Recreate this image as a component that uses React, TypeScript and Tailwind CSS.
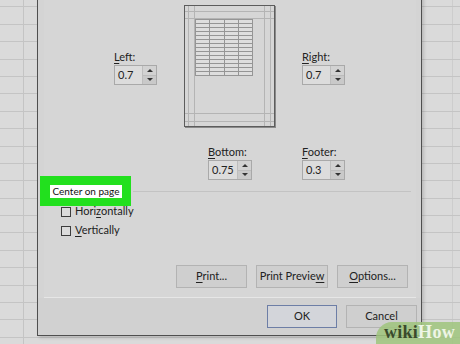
import React from 'react';

const font = { fontFamily: 'Lato, "Open Sans", sans-serif' };

const SpinBox: React.FC<{ label: React.ReactNode; value: string; width?: string }> = ({ label, value, width = 'w-[43px]' }) => (
  <div className={`flex flex-col ${width}`}>
    <div className="h-[14px] mb-[1px] text-[11px] leading-[14px] text-[#222]">{label}</div>
    <div className="flex h-[20px] border border-[#a9a9a9] bg-[#dcdcdc]">
      <div className="flex-1 flex items-center pl-[3px] text-[11px] text-[#222]">{value}</div>
      <div className="w-[14px] flex flex-col border-l border-[#bdbdbd]">
        <div className="flex-1 flex items-center justify-center bg-[#d2d2d2] border-b border-[#bcbcbc]">
          <span className="block w-0 h-0 border-l-[3px] border-r-[3px] border-b-[3px] border-l-transparent border-r-transparent border-b-[#333]" />
        </div>
        <div className="flex-1 flex items-center justify-center bg-[#c9c9c9]">
          <span className="block w-0 h-0 border-l-[3px] border-r-[3px] border-t-[3px] border-l-transparent border-r-transparent border-t-[#333]" />
        </div>
      </div>
    </div>
  </div>
);

const Btn: React.FC<{ children: React.ReactNode; w?: string; def?: boolean }> = ({ children, w = 'w-[71px]', def }) => (
  <div
    className={`${w} h-[23px] flex items-center justify-center text-[11px] text-[#222] bg-[#cfcfcf] border ${
      def ? 'border-[#6d7ea6] bg-[#d3d5da]' : 'border-[#b3b3b3]'
    }`}
  >
    {children}
  </div>
);

const PagePreview = () => {
  const rows = Array.from({ length: 14 }, (_, i) => 14 + i * 4);
  return (
    <svg width="92" height="123" viewBox="0 0 92 123">
      <rect x="0.5" y="0.5" width="90" height="121" fill="#d6d6d6" stroke="#5c5c5c" />
      <line x1="91.5" y1="1" x2="91.5" y2="123" stroke="#8a8a8a" />
      <line x1="1" y1="122.5" x2="92" y2="122.5" stroke="#8a8a8a" />
      {[4, 10, 80, 86].map((x) => (
        <line key={x} x1={x + 0.5} y1="1" x2={x + 0.5} y2="121" stroke="#b4b4b4" />
      ))}
      {[6, 13, 108, 116].map((y) => (
        <line key={y} x1="1" y1={y + 0.5} x2="90" y2={y + 0.5} stroke="#b4b4b4" />
      ))}
      <rect x="11.5" y="14.5" width="57" height="56" fill="#dedede" stroke="#959595" />
      {rows.map((y) => (
        <line key={y} x1="11.5" y1={y + 0.5} x2="68.5" y2={y + 0.5} stroke="#959595" />
      ))}
      {[25, 40, 54].map((x) => (
        <line key={x} x1={x + 0.5} y1="14.5" x2={x + 0.5} y2="70.5" stroke="#959595" />
      ))}
    </svg>
  );
};

const App: React.FC = () => {
  const rows = Array.from({ length: 22 });

  return (
    <div className="relative w-[460px] h-[344px] overflow-hidden bg-[#dadada]" style={font}>
      {/* spreadsheet behind the dialog */}
      <div className="flex flex-col -mt-[10px]">
        {rows.map((_, i) => (
          <div key={i} className="flex h-[17.4px] shrink-0 border-b border-[#c4c4c4]">
            <div className="w-[24px] border-r border-[#c4c4c4]" />
            <div className="flex-1" />
            <div className="w-[8px] border-l border-[#cdcdcd]" />
          </div>
        ))}
      </div>

      {/* Page Setup dialog */}
      <div className="absolute left-[37px] top-[-10px] w-[385px] h-[346px] flex flex-col bg-[#d4d4d4] border border-[#4f4f4f] shadow-[2px_2px_3px_rgba(0,0,0,0.15)]">
        <div className="flex-1 flex flex-col ml-[6px] mr-[5px] bg-[#d6d6d6] border-b border-[#e6e6e6]">
          <div className="flex items-start mt-[14px] pl-[70px]">
            <div className="mt-[45px]">
              <SpinBox label={<><u className="underline-offset-2">L</u>eft:</>} value="0.7" />
            </div>
            <div className="ml-[27px]">
              <PagePreview />
            </div>
            <div className="ml-[26px] mt-[45px]">
              <SpinBox label={<><u className="underline-offset-2">R</u>ight:</>} value="0.7" />
            </div>
          </div>

          <div className="flex items-start mt-[17px] pl-[164px]">
            <SpinBox label={<><u className="underline-offset-2">B</u>ottom:</>} value="0.75" width="w-[44px]" />
            <div className="ml-[50px]">
              <SpinBox label={<><u className="underline-offset-2">F</u>ooter:</>} value="0.3" />
            </div>
          </div>

          <div className="flex items-center -mt-[4px]">
            <div className="-ml-[4px] pl-[10px] pr-[9px] pt-[9px] pb-[8px] bg-[#22e01e]">
              <div className="w-[72px] h-[13px] bg-white flex items-center justify-center text-[10px] text-[#111] whitespace-nowrap">
                Center on page
              </div>
            </div>
            <div className="flex-1 h-px bg-[#c3c3c3] mr-[5px] ml-[2px]" />
          </div>

          <div className="flex flex-col pl-[17px] -mt-[4px]">
            <div className="flex items-center h-[19px] gap-[4px]">
              <span className="w-[10px] h-[10px] border border-[#3d3d3d] bg-[#dcdcdc]" />
              <span className="text-[11px] text-[#222]">Hori<u className="underline-offset-2">z</u>ontally</span>
            </div>
            <div className="flex items-center h-[19px] gap-[4px]">
              <span className="w-[10px] h-[10px] border border-[#3d3d3d] bg-[#dcdcdc]" />
              <span className="text-[11px] text-[#222]"><u className="underline-offset-2">V</u>ertically</span>
            </div>
          </div>

          <div className="mt-auto mb-[9px] pr-[8px] flex justify-end gap-[9px]">
            <Btn><u className="underline-offset-2">P</u>rint...</Btn>
            <Btn w="w-[72px]">Print Previe<u className="underline-offset-2">w</u></Btn>
            <Btn><u className="underline-offset-2">O</u>ptions...</Btn>
          </div>
        </div>

        <div className="h-[37px] flex items-center justify-end gap-[9px] pr-[4px] bg-[#d1d1d1]">
          <Btn w="w-[70px]" def>OK</Btn>
          <Btn>Cancel</Btn>
        </div>
      </div>

      {/* watermark */}
      <div className="absolute right-0 bottom-0 w-[84px] h-[22px] rounded-tl-[16px] bg-[#9fc47c]/85 flex items-end justify-end pr-[5px] pb-[3px]">
        <span className="text-[18px] font-bold leading-none tracking-[0.3px]" style={{ fontFamily: '"Liberation Serif", serif' }}>
          <span className="text-[#3a4a2c]">wiki</span>
          <span className="text-[#eef5e6]">How</span>
        </span>
      </div>
    </div>
  );
};

export default App;
